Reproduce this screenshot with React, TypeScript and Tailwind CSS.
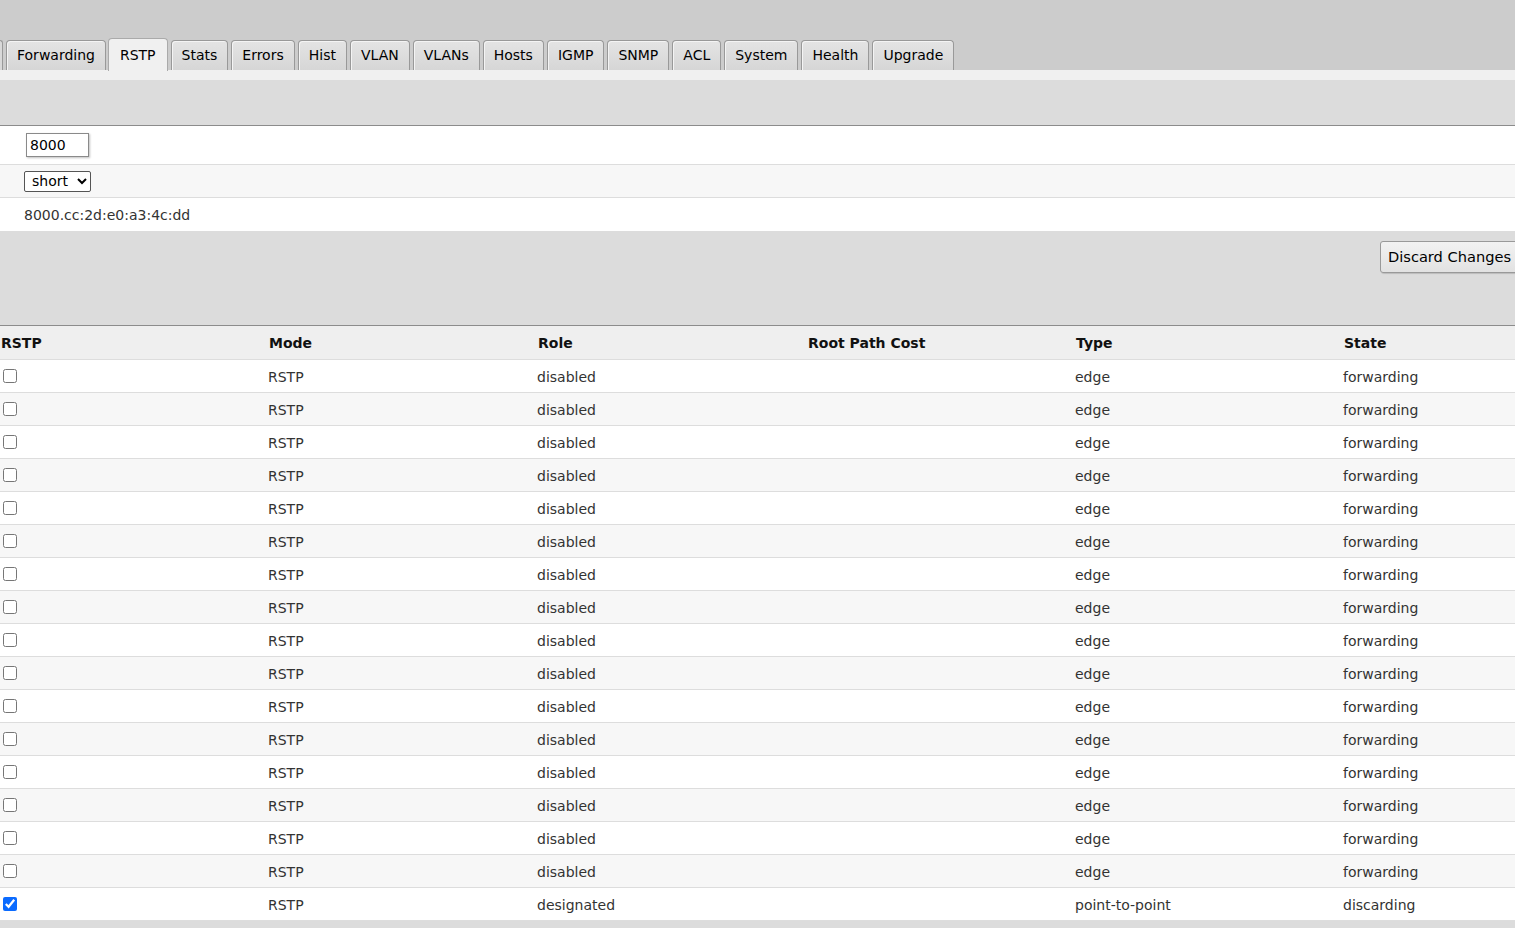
import React from "react";

const tabs = ["Forwarding", "RSTP", "Stats", "Errors", "Hist", "VLAN", "VLANs", "Hosts", "IGMP", "SNMP", "ACL", "System", "Health", "Upgrade"];

type Row = { checked: boolean; mode: string; role: string; cost: string; type: string; state: string };

const rows: Row[] = [
  ...Array.from({ length: 16 }, () => ({ checked: false, mode: "RSTP", role: "disabled", cost: "", type: "edge", state: "forwarding" })),
  { checked: true, mode: "RSTP", role: "designated", cost: "", type: "point-to-point", state: "discarding" },
];

const cols = "grid grid-cols-[267px_269px_270px_268px_268px_469px]";

export default function App() {
  return (
    <div className="w-full min-h-[928px] overflow-hidden bg-[#dcdcdc] text-[14px] text-[#333]" style={{ fontFamily: '"DejaVu Sans", Verdana, sans-serif' }}>
      {/* top tab bar */}
      <div className="h-[70px] bg-[#cccccc] flex items-end">
        <div className="flex items-end gap-[3px]">
          <div className="w-[3px] h-[30px] border-r border-t border-[#999] rounded-tr-[4px] bg-[#d9d9d9]" />
          {tabs.map((t) =>
            t === "RSTP" ? (
              <div key={t} className="h-[33px] px-[11px] pt-[6px] -ml-[1px] border border-b-0 border-[#aaa] rounded-t-[4px] bg-[#f0f0f0] text-black leading-[20px] relative top-[1px]">
                {t}
              </div>
            ) : (
              <div key={t} className="h-[30px] px-[10px] pt-[4px] border border-b-0 border-[#999] rounded-t-[4px] bg-gradient-to-b from-[#e4e4e4] to-[#d6d6d6] text-black leading-[20px] shadow-[inset_1px_1px_0_#f4f4f4]">
                {t}
              </div>
            )
          )}
        </div>
      </div>
      <div className="h-[10px] bg-[#f0f0f0]" />
      <div className="h-[46px] bg-[#dcdcdc] border-b border-[#8c8c8c]" />

      {/* settings rows */}
      <div className="h-[39px] bg-white border-b border-[#dddddd] flex items-center pl-[26px]">
        <input
          defaultValue="8000"
          className="w-[63px] h-[24px] border border-[#8a8a8a] px-[3px] text-[14px] text-black shadow-[1px_1px_2px_rgba(0,0,0,0.25)] outline-none"
          style={{ fontFamily: '"DejaVu Sans", Verdana, sans-serif' }}
        />
      </div>
      <div className="h-[33px] bg-[#f7f7f7] border-b border-[#dddddd] flex items-center pl-[24px]">
        <select
          defaultValue="short"
          className="w-[67px] h-[21px] border border-[#555] bg-white text-[14px] text-black px-[3px] leading-[18px] rounded-[2px]"
          style={{ fontFamily: '"DejaVu Sans", Verdana, sans-serif' }}
        >
          <option value="short">short</option>
          <option value="long">long</option>
        </select>
      </div>
      <div className="h-[33px] bg-white flex items-center pl-[24px] pt-[1px]">8000.cc:2d:e0:a3:4c:dd</div>

      {/* button band */}
      <div className="h-[95px] bg-[#dcdcdc] border-b border-[#8c8c8c] flex justify-end items-start pt-[10px]">
        <button className="h-[32px] px-[7px] mr-[-4px] border border-[#999] rounded-[3px] bg-gradient-to-b from-[#f2f2f2] to-[#e2e2e2] text-[14.6px] text-black leading-[20px] shadow-[1px_1px_1px_rgba(0,0,0,0.15)] whitespace-nowrap">
          Discard Changes
        </button>
      </div>

      {/* table */}
      <div className="w-[1611px]">
        <div className={`${cols} h-[34px] pt-[2px] bg-[#efefef] border-b border-[#dddddd] items-center font-bold text-[#111]`}>
          <div className="pl-[1px]">RSTP</div>
          <div className="pl-[2px]">Mode</div>
          <div className="pl-[2px]">Role</div>
          <div className="pl-[2px]">Root Path Cost</div>
          <div className="pl-[2px]">Type</div>
          <div className="pl-[2px]">State</div>
        </div>
        {rows.map((r, i) => (
          <div key={i} className={`${cols} h-[33px] pt-[2px] items-center border-b border-[#dddddd] ${i % 2 === 0 ? "bg-white" : "bg-[#f7f7f7]"}`}>
            <div className="flex items-center -mt-[2px]">
              <input type="checkbox" defaultChecked={r.checked} className="m-0 ml-[3px] w-[14px] h-[14px] accent-[#0b6bff]" />
            </div>
            <div className="pl-[1px]">{r.mode}</div>
            <div className="pl-[1px]">{r.role}</div>
            <div className="pl-[1px]">{r.cost}</div>
            <div className="pl-[1px]">{r.type}</div>
            <div className="pl-[1px]">{r.state}</div>
          </div>
        ))}
      </div>
    </div>
  );
}
